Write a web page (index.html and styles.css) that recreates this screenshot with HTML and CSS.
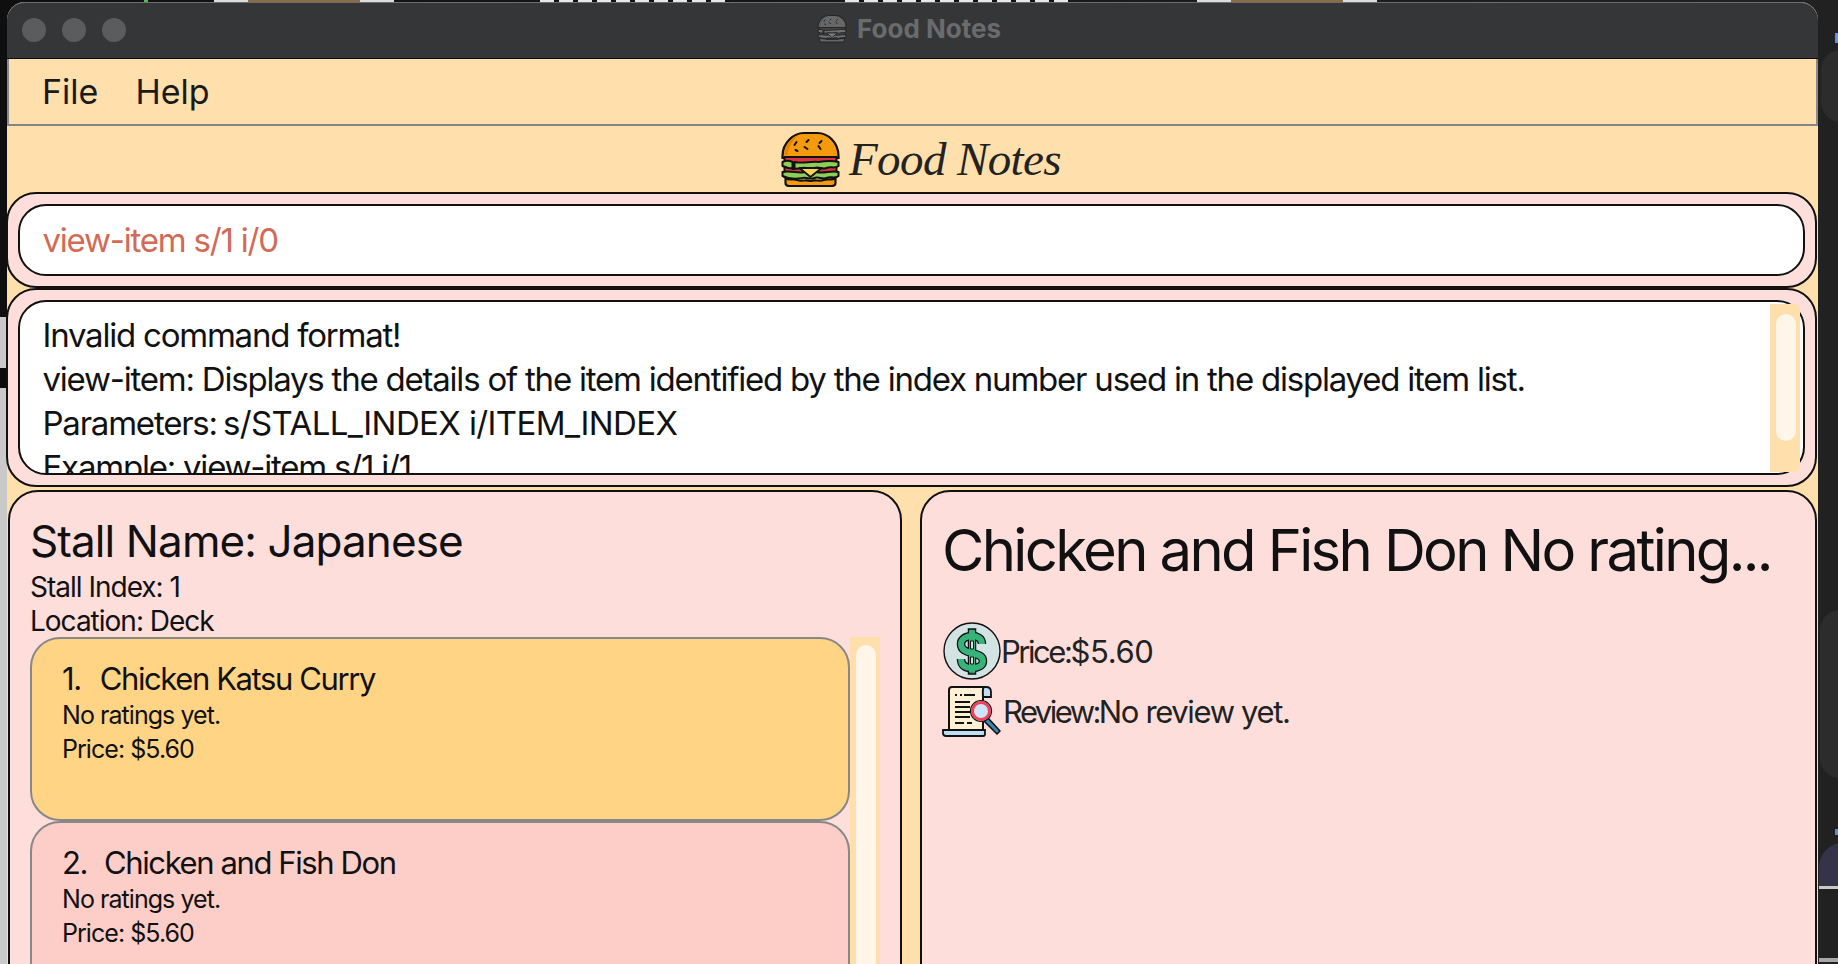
FILE: index.html
```html
<!DOCTYPE html>
<html lang="en">
<head>
<meta charset="utf-8">
<title>Food Notes</title>
<link rel="stylesheet" href="styles.css">
</head>
<body>
<svg class="defs" width="0" height="0" aria-hidden="true">
  <symbol id="burger" viewBox="0 0 60 56">
    <path d="M2 25C2 11 14 2 23 2H37C47 2 58 11 58 25V27H2Z" fill="#f59a0b" stroke="#111" stroke-width="2.2"/>
    <path d="M4 24C5 14 10 8 17 5C11 10 8 16 7 24Z" fill="#e07f0a"/>
    <path d="M16 11l-2 3M28 9l-2 2M41 10l-2 2M24 16l3 2M38 15l2 3M15 19l2 1" stroke="#111" stroke-width="2" stroke-linecap="round"/>
    <rect x="4" y="26" width="52" height="20" fill="#d9343f" stroke="#111" stroke-width="2"/>
    <path d="M2 31C6 29 10 30 12 31V38H14V31C22 33 30 30 38 31C44 30 50 29 58 31V35C54 38 50 35 46 37C42 39 38 35 34 37C30 39 26 36 22 37C16 38 8 38 2 35Z" fill="#8ccf58" stroke="#111" stroke-width="2" stroke-linejoin="round"/>
    <path d="M2 41C10 39 18 43 24 41H36C44 43 50 39 58 41V45C54 48 50 45 46 47C42 49 38 45 34 47C30 49 26 46 22 47C16 48 8 48 2 45Z" fill="#8ccf58" stroke="#111" stroke-width="2" stroke-linejoin="round"/>
    <path d="M19 37H41L30 46Z" fill="#fbd25c" stroke="#111" stroke-width="1.8" stroke-linejoin="round"/>
    <path d="M5 47C9 50 13 47 17 49C21 51 25 48 30 50C35 48 39 51 43 49C47 47 51 50 55 47V52C55 54 53 55 51 55H9C7 55 5 54 5 52Z" fill="#f59a0b" stroke="#111" stroke-width="2.2" stroke-linejoin="round"/>
  </symbol>
</svg>

<main class="desktop">
  <div class="scrap scrap-a"></div>
  <div class="scrap scrap-b"></div>
  <div class="scrap scrap-c"></div>
  <div class="scrap scrap-d"></div>
  <div class="scrap scrap-e"></div>
  <div class="side side-grey"></div>
  <div class="side side-black"></div>
  <div class="dock dock-a"></div>
  <div class="dock dock-b"></div>
  <div class="dock dock-c"></div>
  <div class="dock dock-d"></div>
  <div class="dock dock-e"></div>
  <div class="dock dock-f"></div>
  <div class="dock dock-g"></div>

  <section class="window">
    <header class="titlebar">
      <div class="lights"><span class="light"></span><span class="light"></span><span class="light"></span></div>
      <div class="title">
        <svg class="title-icon"><use href="#burger"/></svg>
        <span>Food Notes</span>
      </div>
    </header>

    <nav class="menubar"><span>File</span><span>Help</span></nav>

    <div class="banner">
      <svg class="banner-icon"><use href="#burger"/></svg>
      <span class="banner-text">Food Notes</span>
    </div>

    <div class="shell shell-command">
      <div class="field command">view-item s/1 i/0</div>
    </div>

    <div class="shell shell-result">
      <div class="field result">
        <p>Invalid command format!</p>
        <p>view-item: Displays the details of the item identified by the index number used in the displayed item list.</p>
        <p>Parameters: <span class="caps">s/STALL_INDEX i/ITEM_INDEX</span></p>
        <p>Example: view-item s/1 i/1</p>
      </div>
      <div class="scrollbar result-scroll"><div class="thumb result-thumb"></div></div>
    </div>

    <div class="panels">
      <section class="panel stall">
        <h2 class="stall-name">Stall Name: Japanese</h2>
        <p class="stall-meta">Stall Index: 1</p>
        <p class="stall-meta">Location: Deck</p>
        <div class="list">
          <div class="cards">
            <article class="card card-selected">
              <h3 class="card-name"><span class="num">1.</span>Chicken Katsu Curry</h3>
              <p class="card-line">No ratings yet.</p>
              <p class="card-line">Price: $5.60</p>
            </article>
            <article class="card">
              <h3 class="card-name"><span class="num num-tight">2.</span>Chicken and Fish Don</h3>
              <p class="card-line">No ratings yet.</p>
              <p class="card-line">Price: $5.60</p>
            </article>
          </div>
          <div class="scrollbar list-scroll"><div class="thumb list-thumb"></div></div>
        </div>
      </section>

      <section class="panel detail">
        <h1 class="detail-title">Chicken and Fish Don No rating...</h1>
        <div class="row row-price">
          <svg class="icon-price" viewBox="0 0 58 58">
            <circle cx="29" cy="29" r="28" fill="#d3e2e2" stroke="#111" stroke-width="1.4"/>
            <path d="M25.5 7H32.5V52H25.5Z" fill="#36b37a" stroke="#111" stroke-width="1.5"/>
            <path d="M39 22C39 16 34 14 29 14C23 14 18 17 18 22C18 28 23 29.5 29 31C35 32.5 40 34 40 39C40 44 35 46 29 46C23 46 18 44 18 37" fill="none" stroke="#111" stroke-width="8.5"/>
            <path d="M39 22C39 16 34 14 29 14C23 14 18 17 18 22C18 28 23 29.5 29 31C35 32.5 40 34 40 39C40 44 35 46 29 46C23 46 18 44 18 37" fill="none" stroke="#36b37a" stroke-width="6"/>
            <path d="M26 9H32V50H26Z" fill="#36b37a"/>
            <path d="M27.5 19H30.5V27H27.5ZM27.5 35H30.5V42H27.5Z" fill="#d3e2e2" stroke="#111" stroke-width="1"/>
          </svg>
          <span class="price-label">Price:</span><span class="price-value">$5.60</span>
        </div>
        <div class="row row-review">
          <svg class="icon-review" viewBox="0 0 60 52">
            <path d="M38 2H44C47 2 49 4 49 7V12H42" fill="#bfdcf5" stroke="#111" stroke-width="1.8"/>
            <path d="M10 2H42C40 4 41 8 41 12V47H7V5C7 3 8 2 10 2Z" fill="#fdf0d5" stroke="#111" stroke-width="2"/>
            <path d="M1 45H43V49C43 50 42 51 41 51H4C2 51 1 50 1 48Z" fill="#bfdcf5" stroke="#111" stroke-width="1.8"/>
            <path d="M13 10H15M18 10H20M22 10H33M13 17H28M13 22H28M13 27H28M13 32H28M13 38H22M25 38H30" stroke="#111" stroke-width="1.8"/>
            <path d="M46 33L58 46L55 49L42 36Z" fill="#3a87b0" stroke="#111" stroke-width="1.6" stroke-linejoin="round"/>
            <circle cx="39" cy="26" r="10.5" fill="#cfe4f7" stroke="#111" stroke-width="1.2"/>
            <circle cx="39" cy="26" r="8.5" fill="none" stroke="#f0415a" stroke-width="3"/>
          </svg>
          <span class="review-label">Review:</span><span class="review-value">No review yet.</span>
        </div>
      </section>
    </div>
  </section>
</main>
</body>
</html>
```

FILE: styles.css
```css
* { box-sizing: border-box; }
html, body { margin: 0; padding: 0; }
body { font-family: Inter, "Noto Sans", sans-serif; color: #111; background: #1f1f1f; }
p, h1, h2, h3 { margin: 0; font-weight: 400; }
.defs { position: absolute; }

.desktop {
  position: relative;
  width: 1838px;
  height: 964px;
  overflow: hidden;
  background: linear-gradient(to right, #0f0f0f 0 8px, #212121 1800px);
}

.scrap { position: absolute; top: 0; height: 2px; }
.scrap-a { left: 214px; width: 180px; background: linear-gradient(to right, #ddd 0 34px, #8a6a42 34px 146px, #ddd 146px); }
.scrap-b { left: 540px; width: 190px; background: repeating-linear-gradient(to right, #e8e8e8 0 14px, #111 14px 19px); }
.scrap-c { left: 845px; width: 225px; background: repeating-linear-gradient(to right, #e8e8e8 0 14px, #111 14px 19px); }
.scrap-d { left: 1197px; width: 180px; background: linear-gradient(to right, #ddd 0 34px, #8a6a42 34px 146px, #ddd 146px); }
.scrap-e { left: 144px; width: 4px; background: #4fc04f; }

.side { position: absolute; left: 0; width: 7px; }
.side-grey { top: 317px; height: 647px; background: #c9c9c9; }
.side-black { top: 368px; height: 20px; background: #0b0b0b; }

.dock { position: absolute; }
.dock-a { left: 1821px; top: 50px; width: 40px; height: 72px; border-radius: 24px; background: #2c2c2c; }
.dock-b { left: 1835px; top: 33px; width: 3px; height: 10px; background: #5f93e6; }
.dock-c { left: 1820px; top: 610px; width: 40px; height: 168px; border-radius: 24px; background: #2c2c2c; }
.dock-d { left: 1835px; top: 829px; width: 3px; height: 6px; background: #4d8fe6; }
.dock-e { left: 1819px; top: 843px; width: 40px; height: 44px; border-radius: 24px 0 0 0; background: #33334a; }
.dock-f { left: 1819px; top: 886px; width: 19px; height: 3px; background: #c9c9c9; }
.dock-g { left: 1819px; top: 958px; width: 19px; height: 4px; background: #a8a8a8; }

.window {
  position: absolute;
  left: 7px;
  top: 2px;
  width: 1811px;
  height: 1040px;
  display: flex;
  flex-direction: column;
  background: #ffdfab;
  border-radius: 18px 18px 0 0;
}

.titlebar {
  position: relative;
  flex: none;
  height: 57px;
  display: flex;
  align-items: center;
  justify-content: center;
  background: #353638;
  border-top: 1px solid #6d6e70;
  border-bottom: 1px solid #0c0c0c;
  border-radius: 18px 18px 0 0;
}
.lights { position: absolute; left: 15px; top: 15px; display: flex; gap: 16px; }
.light { width: 24px; height: 24px; border-radius: 50%; background: #5b5c5e; }
.title { display: flex; align-items: center; gap: 10px; padding: 0 7px 4px 0; font-size: 26px; font-weight: 700; color: #6a6b6d; }
.title-icon { width: 30px; height: 29px; filter: grayscale(1) opacity(.45); }

.menubar {
  flex: none;
  height: 67px;
  display: flex;
  align-items: center;
  gap: 37px;
  padding-left: 33px;
  font-size: 34px;
  background: #ffdfab;
  border-left: 2px solid #8a8a8a;
  border-right: 2px solid #8a8a8a;
  border-bottom: 2px solid #858585;
  color: #1a1a1a;
}

.banner {
  flex: none;
  height: 66px;
  display: flex;
  align-items: center;
  justify-content: center;
  gap: 8px;
  padding-left: 16px;
}
.banner-icon { width: 61px; height: 56px; }
.banner-text {
  font-family: "Liberation Serif", serif;
  font-style: italic;
  font-size: 47px;
  letter-spacing: -0.6px;
  color: #222;
}

.shell {
  position: relative;
  flex: none;
  width: 1811px;
  margin-left: -1px;
  padding: 10px;
  background: #fddedb;
  border: 2px solid #111;
  border-radius: 30px;
}
.shell-command { height: 96px; }
.shell-result { height: 199px; }

.field {
  height: 100%;
  background: #fff;
  border: 2px solid #111;
  border-radius: 28px;
  padding: 0 22.5px;
  font-size: 33px;
  letter-spacing: -1.22px;
  overflow: hidden;
}
.command { display: flex; align-items: center; color: #d26a55; }
.result { padding-top: 11px; line-height: 44px; }
.caps { margin-left: -2px; letter-spacing: -0.6px; }

.scrollbar { position: absolute; background: #ffdfab; }
.thumb { background: #fff5e8; border-radius: 10px; }
.result-scroll { right: 15px; top: 14px; width: 30px; height: 168px; border-radius: 0 5px 5px 0; padding: 10px 4px 0 6px; }
.result-thumb { height: 127px; }

.panels {
  flex: none;
  display: flex;
  gap: 18px;
  margin-top: 3px;
  padding-left: 1px;
}
.panel {
  height: 560px;
  background: #fddedb;
  border: 2px solid #111;
  border-radius: 30px;
}
.stall { width: 894px; padding: 22px 0 0 20px; }
.stall-name { font-size: 44px; line-height: 55px; letter-spacing: -0.9px; margin-bottom: 1px; }
.stall-meta { font-size: 28px; line-height: 34px; letter-spacing: -1px; }
.list { position: relative; display: flex; width: 850px; margin-top: -1px; }
.cards { width: 820px; flex: none; }
.card {
  height: 184px;
  padding: 20px 30px 0;
  border: 2px solid #888;
  border-radius: 30px;
  background: #fdcdc7;
}
.card-selected { background: #ffd485; }
.card-name { font-size: 31px; line-height: 40px; margin-bottom: -1px; letter-spacing: -1.4px; }
.num { margin-right: 19px; }
.num-tight { margin-right: 17px; }
.card-line { font-size: 25px; line-height: 34px; letter-spacing: -0.95px; }
.list-scroll { position: static; width: 30px; flex: none; padding: 8px 4px 0 6px; }
.list-thumb { height: 500px; }

.detail { width: 897px; padding: 23px 0 0 20px; }
.detail-title { font-size: 58px; line-height: 70px; margin-bottom: 36px; white-space: nowrap; letter-spacing: -2.65px; }
.row { display: flex; align-items: center; font-size: 31px; color: #222; }
.row-price { height: 60px; padding-left: 1px; }
.row-review { height: 52px; margin-top: 4px; padding-left: 1px; }
.icon-price { width: 58px; height: 58px; }
.icon-review { width: 60px; height: 52px; margin: 0 1px 0 -1px; }
.price-label { letter-spacing: -2.45px; }
.price-value { letter-spacing: -0.35px; }
.review-label { letter-spacing: -2.55px; }
.review-value { letter-spacing: -1.37px; }
```
